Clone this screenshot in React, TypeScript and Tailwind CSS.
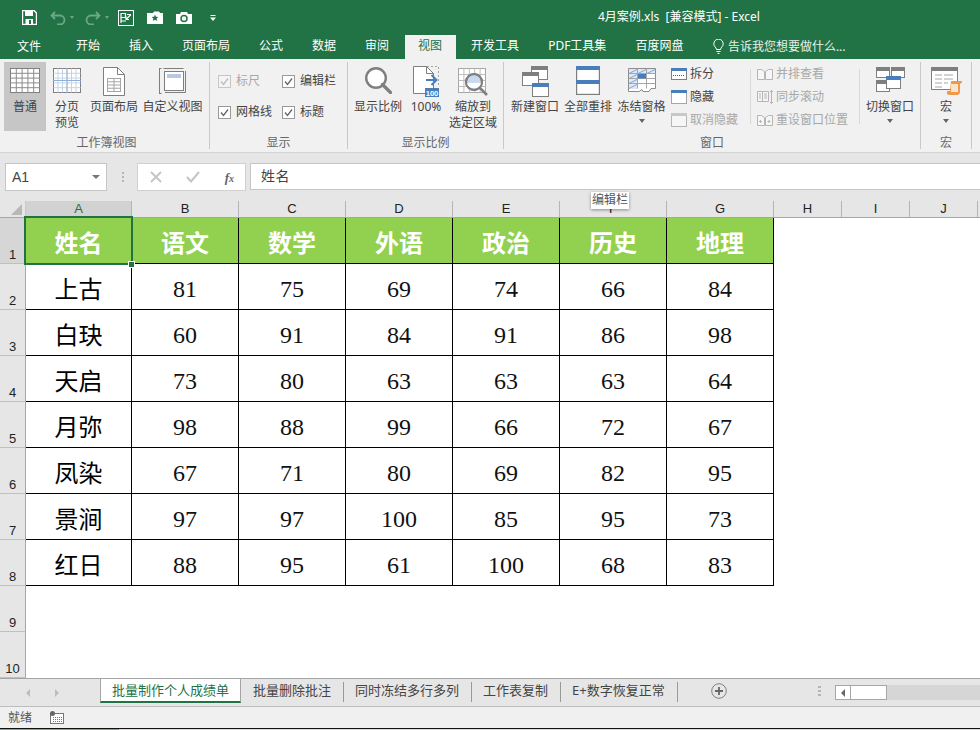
import React from "react";

const headers = ["姓名", "语文", "数学", "外语", "政治", "历史", "地理"];
const rows: (string | number)[][] = [
  ["上古", 81, 75, 69, 74, 66, 84],
  ["白玦", 60, 91, 84, 91, 86, 98],
  ["天启", 73, 80, 63, 63, 63, 64],
  ["月弥", 98, 88, 99, 66, 72, 67],
  ["凤染", 67, 71, 80, 69, 82, 95],
  ["景涧", 97, 97, 100, 85, 95, 73],
  ["红日", 88, 95, 61, 100, 68, 83],
];
const colClasses = ["w-[106px]", "w-[107px]", "w-[107px]", "w-[107px]", "w-[107px]", "w-[107px]", "w-[107px]"];
const GRAY = "#7f7f7f";
const BLUE = "#4a7ebb";

function GridLines({ x, y, w, h, cols, rows: r, stroke = "#a6a6a6" }: { x: number; y: number; w: number; h: number; cols: number; rows: number; stroke?: string }) {
  const lines = [];
  for (let i = 1; i < cols; i++) lines.push(<line key={"c" + i} x1={x + (w * i) / cols} x2={x + (w * i) / cols} y1={y} y2={y + h} stroke={stroke} />);
  for (let i = 1; i < r; i++) lines.push(<line key={"r" + i} x1={x} x2={x + w} y1={y + (h * i) / r} y2={y + (h * i) / r} stroke={stroke} />);
  return <>{lines}</>;
}

function Svg({ w, h, children }: { w: number; h: number; children: React.ReactNode }) {
  return (
    <svg width={w} height={h} viewBox={`0 0 ${w} ${h}`} className="block shrink-0">
      {children}
    </svg>
  );
}

const NormalIcon = () => (
  <Svg w={30} h={25}>
    <rect x="0.5" y="0.5" width="29" height="24" fill="#fff" stroke={GRAY} />
    <GridLines x={0.5} y={0.5} w={29} h={24} cols={5} rows={5} stroke="#8c8c8c" />
  </Svg>
);
const PageBreakIcon = () => (
  <Svg w={28} h={25}>
    <rect x="0.5" y="0.5" width="27" height="24" fill="#fff" stroke={GRAY} />
    <GridLines x={0.5} y={0.5} w={27} h={24} cols={6} rows={5} stroke="#c5d3e6" />
    <line x1="14" x2="14" y1="0" y2="25" stroke="#8fb0d8" />
    <line x1="0" x2="28" y1="12.5" y2="12.5" stroke="#8fb0d8" />
  </Svg>
);
const PageLayoutIcon = () => (
  <Svg w={22} h={29}>
    <path d="M.5.5h14l7 7v21H.5z" fill="#fff" stroke={GRAY} />
    <path d="M14.5.5v7h7" fill="none" stroke={GRAY} />
    <rect x="4.5" y="11.5" width="13" height="13" fill="none" stroke="#a6a6a6" />
    <GridLines x={4.5} y={11.5} w={13} h={13} cols={2} rows={4} />
  </Svg>
);
const CustomViewIcon = () => (
  <Svg w={28} h={28}>
    <path d="M4.500 1.500h20M26.500 4v21.500H6" fill="none" stroke={GRAY} />
    <path d="M.5 1v26M0 1.500h2.500M0 26.500h2.500" stroke={GRAY} fill="none" />
    <rect x="5.5" y="4.5" width="19" height="19" fill="#fff" stroke={GRAY} />
    <rect x="8" y="7" width="14" height="4" fill="#b6c9e4" />
  </Svg>
);
const MagnifierIcon = () => (
  <Svg w={27} h={27}>
    <circle cx="11" cy="11" r="9.800" fill="#fff" stroke={GRAY} strokeWidth="2.400" />
    <line x1="17.500" y1="17.500" x2="25.500" y2="25.500" stroke={GRAY} strokeWidth="3.200" strokeLinecap="round" />
  </Svg>
);
const Zoom100Icon = () => (
  <Svg w={26} h={31}>
    <path d="M.5.5h13l7 7v20H.5z" fill="#fff" stroke={GRAY} />
    <path d="M13.500.5v7h7" fill="none" stroke={GRAY} />
    <path d="M14 .5h11.500v20" fill="none" stroke="#a6a6a6" strokeDasharray="2 2" />
    <path d="M13 14h10M18.500 9l5 5-5 5" fill="none" stroke={BLUE} strokeWidth="2" />
    <rect x="12" y="22" width="14" height="9" fill={BLUE} />
    <text x="19" y="29.500" fontSize="7.500" fontWeight="700" fill="#fff" textAnchor="middle" fontFamily="Liberation Sans">100</text>
  </Svg>
);
const ZoomSelIcon = () => (
  <Svg w={30} h={28}>
    <rect x="0.5" y="0.5" width="27" height="24" fill="#fff" stroke="#a6a6a6" />
    <GridLines x={0.5} y={0.5} w={27} h={24} cols={5} rows={4} stroke="#bdbdbd" />
    <circle cx="16" cy="14" r="8" fill="#c9d9ee" stroke={GRAY} strokeWidth="2" />
    <path d="M9 15h14v2a8 6 0 0 1-14 0z" fill="#fff" />
    <circle cx="16" cy="14" r="8" fill="none" stroke={GRAY} strokeWidth="2" />
    <line x1="22" y1="20" x2="29" y2="27" stroke={GRAY} strokeWidth="2.600" />
  </Svg>
);
const WinBox = ({ x, y, w, h, fill = GRAY, bar = 4 }: { x: number; y: number; w: number; h: number; fill?: string; bar?: number }) => (
  <>
    <rect x={x + 0.5} y={y + 0.5} width={w - 1} height={h - 1} fill="#fff" stroke={GRAY} />
    <rect x={x} y={y} width={w} height={bar} fill={fill} />
  </>
);
const NewWindowIcon = () => (
  <Svg w={27} h={31}>
    <WinBox x={9} y={0} w={17} h={14} />
    <WinBox x={0} y={6} w={17} h={14} />
    <WinBox x={10} y={17} w={17} h={14} fill={BLUE} />
  </Svg>
);
const ArrangeIcon = () => (
  <Svg w={24} h={29}>
    <rect x="0.6" y="0.6" width="22.800" height="27.800" fill="#fff" stroke={GRAY} strokeWidth="1.200" />
    <rect x="0" y="0" width="24" height="4" fill={BLUE} />
    <rect x="0" y="14" width="24" height="4" fill={BLUE} />
  </Svg>
);
const FreezeIcon = () => (
  <Svg w={28} h={25}>
    <path d="M.5.5h27v20H23l-2 3h-6l-1-2-3 2H.5z" fill="#fff" stroke="#8c8c8c" />
    <rect x="1" y="1" width="26" height="5" fill="#dfe8f4" />
    <rect x="1" y="6" width="9" height="15" fill="#dfe8f4" />
    <GridLines x={0.5} y={0.5} w={27} h={20} cols={3} rows={4} stroke="#a6a6a6" />
    <path d="M1 5.500l8-4M10 5.500l8-4M19 5.500l8-4M1 10.500l8-4M1 15.500l8-4M1 20.500l8-4" stroke="#7ea6d6" />
    <rect x="10" y="6" width="8" height="4.500" fill={BLUE} />
  </Svg>
);
const SplitIcon = () => (
  <Svg w={16} h={12}>
    <rect x="0.5" y="0.5" width="15" height="11" fill="#fff" stroke={GRAY} />
    <rect x="0" y="0" width="16" height="3" fill={BLUE} />
    <line x1="2" x2="14" y1="7.500" y2="7.500" stroke="#555" strokeDasharray="1 1" />
  </Svg>
);
const HideIcon = () => (
  <Svg w={16} h={14}>
    <rect x="0.5" y="0.5" width="15" height="13" fill="#fff" stroke="#555" strokeDasharray="1 1" />
    <rect x="0" y="0" width="16" height="3" fill={BLUE} />
  </Svg>
);
const UnhideIcon = () => (
  <Svg w={16} h={14}>
    <rect x="0.5" y="0.5" width="15" height="13" fill="#f6f6f6" stroke="#b5b5b5" />
    <rect x="0" y="0" width="16" height="3" fill="#c8c8c8" />
  </Svg>
);
const SideBySideIcon = () => (
  <Svg w={16} h={12}>
    <path d="M.5 1.500h4l3 2v8h-7zM8.500 3.500l3-2h4v10h-7z" fill="#f6f6f6" stroke="#b5b5b5" />
  </Svg>
);
const SyncIcon = () => (
  <Svg w={16} h={14}>
    <path d="M.5 1.500h5v10h-5zM5.500 1.500h6v10h-6z" fill="#f6f6f6" stroke="#b5b5b5" />
    <path d="M2 4h2M2 6h2M2 8h2M7 4h3M7 6h3M7 8h3" stroke="#b5b5b5" />
    <path d="M14.500 0v14M13 2l1.500-1.500L16 2M13 12l1.500 1.500L16 12" fill="none" stroke="#b5b5b5" />
  </Svg>
);
const ResetIcon = () => (
  <Svg w={16} h={12}>
    <path d="M.5 1.500h4l3 2v8h-7zM8.500 3.500l3-2h4v10h-7z" fill="#f6f6f6" stroke="#b5b5b5" />
    <path d="M2 7.500h3M3.500 6v3M10.500 7.500h3M12 6v3" stroke="#b5b5b5" />
  </Svg>
);
const SwitchIcon = () => (
  <Svg w={29} h={25}>
    <WinBox x={0} y={0} w={14} h={11} />
    <WinBox x={15} y={0} w={14} h={11} />
    <WinBox x={0} y={13} w={14} h={12} />
    <rect x="10.500" y="9.500" width="14" height="12" fill="#fff" stroke={GRAY} />
    <rect x="10" y="9" width="15" height="4" fill={BLUE} />
  </Svg>
);
const MacroIcon = () => (
  <Svg w={31} h={28}>
    <rect x="0.5" y="0.5" width="26" height="22" fill="#fff" stroke={GRAY} />
    <rect x="0" y="0" width="27" height="4" fill={GRAY} />
    <path d="M4 8h7M13 8h9M4 12h7M13 12h9M4 16h7M13 16h4M4 20h7" stroke="#a6a6a6" />
    <path d="M20 14h11v1.500l-2 1.500v9l-2 2H18l-2-1v-3h3z" fill="#ed9a4c" />
    <rect x="20" y="17" width="7" height="8" fill="#fbe3c9" />
  </Svg>
);

function BigButton({ className, icon, lines, active, arrow, iconClass = "" }: { className: string; icon: React.ReactNode; lines: string[]; active?: boolean; arrow?: boolean; iconClass?: string }) {
  return (
    <div className={`h-[69px] flex flex-col items-center shrink-0 ${className} ${active ? "bg-[#c6c6c6]" : ""}`}>
      <div className={`h-[32px] flex justify-center shrink-0 overflow-visible ${iconClass}`}>{icon}</div>
      <div className="mt-[5px] text-[12px] leading-[16px] text-center text-[#444] whitespace-nowrap">
        {lines.map((l) => (
          <div key={l}>{l}</div>
        ))}
      </div>
      {arrow && <div className="mt-[4px] w-0 h-0 border-x-[3.5px] border-x-transparent border-t-[4px] border-t-[#666]" />}
    </div>
  );
}

function Group({ className, label, children }: { className: string; label: string; children: React.ReactNode }) {
  return (
    <div className={`shrink-0 h-[87px] border-r border-[#c9c9c9] flex flex-col ${className}`}>
      <div className="h-[69px] flex">{children}</div>
      <div className="h-[20px] mt-[2px] text-[12px] leading-[20px] text-center text-[#666]">{label}</div>
    </div>
  );
}

function Check({ label, disabled }: { label: string; disabled?: boolean }) {
  return (
    <div className={`flex items-center gap-[5px] text-[12px] leading-[16px] ${disabled ? "text-[#a8a8a8]" : "text-[#444]"}`}>
      <svg width="13" height="13" viewBox="0 0 13 13" className="block">
        <rect x="0.5" y="0.5" width="12" height="12" fill={disabled ? "#f4f4f4" : "#fff"} stroke={disabled ? "#c6c6c6" : "#9a9a9a"} />
        <path d="M3 6.500 5.500 9.500 10 3.500" fill="none" stroke={disabled ? "#bcbcbc" : "#666"} strokeWidth="1.300" />
      </svg>
      <span>{label}</span>
    </div>
  );
}

function SmallItem({ icon, label, disabled }: { icon: React.ReactNode; label: string; disabled?: boolean }) {
  return (
    <div className={`h-[23px] flex items-center gap-[3px] text-[12px] whitespace-nowrap ${disabled ? "text-[#a8a8a8]" : "text-[#444]"}`}>
      <div className="w-[16px] flex justify-center">{icon}</div>
      <span>{label}</span>
    </div>
  );
}

function Tab({ label, active }: { label: string; active?: boolean }) {
  return (
    <div className={`h-[24px] text-[12px] leading-[22px] whitespace-nowrap ${active ? "bg-[#f1f1f1] text-[#217346] pl-[13px] pr-[14px] ml-[1.5px] mr-[0.5px]" : "text-white px-[14.5px]"}`}>
      {label}
    </div>
  );
}

function SheetTab({ label, active }: { label: string; active?: boolean }) {
  return active ? (
    <div className="h-[25px] -mt-px mr-px px-[11px] bg-white border-x border-t border-[#a5a5a5] border-b-2 border-b-[#217346] text-[#217346] text-[13px] leading-[22px] whitespace-nowrap">
      {label}
    </div>
  ) : (
    <div className="h-[20px] my-[3px] pl-[11px] pr-[12px] border-r border-[#9a9a9a] text-[#444] text-[13px] leading-[17px] whitespace-nowrap">{label}</div>
  );
}

function Qat({ children }: { children: React.ReactNode }) {
  return <div className="w-[16px] flex justify-center items-center shrink-0">{children}</div>;
}

export default function App() {
  return (
    <div className="w-[980px] h-[730px] overflow-hidden relative bg-white font-['Noto_Sans','Noto_Sans_CJK_SC',sans-serif] select-none">
      {/* title bar */}
      <div className="h-[35px] bg-[#217346] flex items-center pl-[21px] text-white relative">
        <div className="flex items-center h-[30px]">
          <Qat>
            <svg width="15" height="15" viewBox="0 0 15 15"><path d="M.5.5h11.500l2.500 2.500v11.500H.5z" fill="none" stroke="#fff" strokeWidth="1.400" /><rect x="3" y="1" width="8" height="5" fill="#fff" /><rect x="3.500" y="9" width="7.500" height="5" fill="#fff" /><rect x="7" y="10" width="2" height="4" fill="#217346" /></svg>
          </Qat>
          <div className="w-[13px]" />
          <Qat>
            <svg width="16" height="14" viewBox="0 0 16 14"><path d="M5 1 1.500 4.500 5 8M2 4.500h8a4.500 4.500 0 0 1 0 9H7" fill="none" stroke="#6ea58a" strokeWidth="1.800" /></svg>
          </Qat>
          <div className="ml-[4px] w-0 h-0 border-x-[2.5px] border-x-transparent border-t-[3px] border-t-[#6ea58a]" />
          <div className="w-[11px]" />
          <Qat>
            <svg width="16" height="14" viewBox="0 0 16 14"><path d="M11 1l3.500 3.500L11 8M14 4.500H6a4.500 4.500 0 0 0 0 9h3" fill="none" stroke="#6ea58a" strokeWidth="1.800" /></svg>
          </Qat>
          <div className="ml-[4px] w-0 h-0 border-x-[2.5px] border-x-transparent border-t-[3px] border-t-[#6ea58a]" />
          <div className="w-[9px]" />
          <Qat>
            <svg width="16" height="16" viewBox="0 0 16 16"><rect x=".5" y=".5" width="15" height="15" fill="none" stroke="#fff" /><path d="M3 3.500h4.500v4H3zM3 3v10M9 4.500h4M13 4.500l-5 5M8 6.500v3h3M3 11h5" fill="none" stroke="#fff" strokeWidth="1.200" /></svg>
          </Qat>
          <div className="w-[13px]" />
          <Qat>
            <svg width="16" height="13" viewBox="0 0 16 13"><path d="M0 2h6l1-1.500h5l1 1.500h3v11H0z" fill="#fff" /><path d="M8 3.500l1 2.300 2.400.2-1.800 1.600.6 2.400L8 8.700 5.800 10l.6-2.400L4.600 6 7 5.800z" fill="#217346" /></svg>
          </Qat>
          <div className="w-[13px]" />
          <Qat>
            <svg width="16" height="12" viewBox="0 0 16 12"><path d="M0 2h4l1-2h6l1 2h4v10H0z" fill="#fff" /><circle cx="8" cy="6.500" r="3" fill="#fff" stroke="#217346" strokeWidth="1.500" /></svg>
          </Qat>
          <div className="w-[18px]" />
          <div className="w-[6px]">
            <svg width="6" height="6" viewBox="0 0 6 6" className="block"><path d="M.5.5h5" stroke="#fff" /><path d="M0 2.500h6L3 6z" fill="#fff" /></svg>
          </div>
        </div>
        <div className="absolute left-[598px] top-[8px] text-[12px] leading-[18px] whitespace-pre">4月案例.xls  [兼容模式] - Excel</div>
      </div>

      {/* tabs */}
      <div className="h-[24px] bg-[#217346] flex">
        <div className="w-[61.5px] h-[24px] text-[12px] leading-[24px] text-white pl-[17px]">文件</div>
        {["开始", "插入", "页面布局", "公式", "数据", "审阅"].map((t) => (
          <Tab key={t} label={t} />
        ))}
        <Tab label="视图" active />
        {["开发工具", "PDF工具集", "百度网盘"].map((t) => (
          <Tab key={t} label={t} />
        ))}
        <div className="flex items-start pt-[4px] gap-[4px] ml-[15px] text-[12px] leading-[15px] text-[#e8f0ec] whitespace-nowrap">
          <svg width="11" height="15" viewBox="0 0 11 15" className="block"><path d="M3.500 10.500C3 8 .8 7.500.8 4.800a4.700 4.700 0 0 1 9.400 0C10.200 7.500 8 8 7.500 10.500zM3.500 12.500h4M4.500 14.500h2" fill="none" stroke="#fff" /></svg>
          <span>告诉我您想要做什么...</span>
        </div>
      </div>

      {/* ribbon */}
      <div className="h-[94px] bg-[#f1f1f1] border-b border-[#d4d4d4] flex pt-[3px] pl-[4px]">
        <Group className="w-[206px]" label="工作簿视图">
          <BigButton className="w-[42px]" icon={<NormalIcon />} lines={["普通"]} active iconClass="pt-[6px]" />
          <BigButton className="w-[42px]" icon={<PageBreakIcon />} lines={["分页", "预览"]} iconClass="pt-[6px]" />
          <BigButton className="w-[52px]" icon={<PageLayoutIcon />} lines={["页面布局"]} iconClass="pt-[5px]" />
          <BigButton className="w-[65px]" icon={<CustomViewIcon />} lines={["自定义视图"]} iconClass="pt-[5px]" />
        </Group>
        <Group className="w-[138px]" label="显示">
          <div className="pl-[8px] pt-[11px] grid grid-cols-[64px_64px] grid-rows-[31px_31px] items-start">
            <Check label="标尺" disabled />
            <Check label="编辑栏" />
            <Check label="网格线" />
            <Check label="标题" />
          </div>
        </Group>
        <Group className="w-[156px]" label="显示比例">
          <div className="w-[4px]" />
          <BigButton className="w-[52px]" icon={<MagnifierIcon />} lines={["显示比例"]} iconClass="pt-[5px]" />
          <BigButton className="w-[44px]" icon={<Zoom100Icon />} lines={["100%"]} iconClass="pt-[4px]" />
          <BigButton className="w-[50px]" icon={<ZoomSelIcon />} lines={["缩放到", "选定区域"]} iconClass="pt-[6px]" />
        </Group>
        <Group className="w-[417px]" label="窗口">
          <div className="w-[4px]" />
          <BigButton className="w-[54px]" icon={<NewWindowIcon />} lines={["新建窗口"]} iconClass="pt-[4px]" />
          <BigButton className="w-[52px]" icon={<ArrangeIcon />} lines={["全部重排"]} iconClass="pt-[4px]" />
          <BigButton className="w-[55px]" icon={<FreezeIcon />} lines={["冻结窗格"]} iconClass="pt-[6px]" arrow />
          <div className="pl-[2px] w-[81px]">
            <SmallItem icon={<SplitIcon />} label="拆分" />
            <SmallItem icon={<HideIcon />} label="隐藏" />
            <SmallItem icon={<UnhideIcon />} label="取消隐藏" disabled />
          </div>
          <div className="w-[109px] h-[55px] mt-[7px] border-l border-[#d9d9d9] pl-[6px]">
            <div className="-mt-[7px]">
              <SmallItem icon={<SideBySideIcon />} label="并排查看" disabled />
              <SmallItem icon={<SyncIcon />} label="同步滚动" disabled />
              <SmallItem icon={<ResetIcon />} label="重设窗口位置" disabled />
            </div>
          </div>
          <div className="h-[55px] mt-[7px] border-l border-[#d9d9d9]" />
          <BigButton className="w-[60px]" icon={<SwitchIcon />} lines={["切换窗口"]} iconClass="pt-[5px]" arrow />
        </Group>
        <Group className="w-[51px]" label="宏">
          <BigButton className="w-[50px]" icon={<MacroIcon />} lines={["宏"]} iconClass="pt-[5px]" arrow />
        </Group>
      </div>

      {/* formula band */}
      <div className="h-[48px] bg-[#e6e6e6] pt-[10px] flex items-start">
        <div className="ml-[5px] w-[102px] h-[28px] bg-white border border-[#c6c6c6] flex items-center justify-between pl-[6px] pr-[6px] text-[14px] text-[#444] font-['Liberation_Sans',sans-serif]">
          <span>A1</span>
          <span className="w-0 h-0 border-x-[4px] border-x-transparent border-t-[4px] border-t-[#777]" />
        </div>
        <div className="w-[30px] h-[28px] flex items-center justify-center">
          <svg width="3" height="11" viewBox="0 0 3 11"><path d="M1 0h2v2H1zM1 4h2v2H1zM1 8h2v2H1z" fill="#b5b5b5" /></svg>
        </div>
        <div className="w-[109px] h-[28px] bg-white border border-[#d0d0d0] flex items-center justify-between pl-[12px] pr-[11px]">
          <svg width="12" height="12" viewBox="0 0 12 12"><path d="M1 1l10 10M11 1 1 11" stroke="#c4c4c4" strokeWidth="1.800" /></svg>
          <svg width="14" height="12" viewBox="0 0 14 12"><path d="M1 6l4 4.500L13 1" fill="none" stroke="#c4c4c4" strokeWidth="2" /></svg>
          <span className="text-[13px] italic font-bold font-['Liberation_Serif',serif] text-[#666] leading-none">f<span className="text-[10px]">x</span></span>
        </div>
        <div className="ml-[4px] flex-1 h-[27px] bg-white border-y border-l border-[#c6c6c6] pl-[10px] text-[14px] leading-[24px] tracking-[0.5px] text-[#444]">姓名</div>
      </div>

      {/* grid */}
      <div className="relative">
        <div className="flex h-[17px] bg-[#e6e6e6] border-b border-[#a6a6a6] text-[13px] leading-[16px] text-[#222] font-['Liberation_Sans',sans-serif] text-center">
          <div className="w-[26px] shrink-0 border-r border-[#c9c9c9] relative overflow-hidden">
            <div className="absolute right-[3px] bottom-[2px] w-0 h-0 border-l-[11px] border-l-transparent border-b-[11px] border-b-[#b8b8b8]" />
          </div>
          {["A", "B", "C", "D", "E", "F", "G"].map((c, i) => (
            <div key={c} className={`shrink-0 border-r border-[#b5b5b5] ${colClasses[i]} ${i === 0 ? "bg-[#d2d2d2] text-[#217346]" : ""}`}>
              {c}
            </div>
          ))}
          {["H", "I", "J"].map((c) => (
            <div key={c} className="w-[68px] shrink-0 border-r border-[#b5b5b5]">
              {c}
            </div>
          ))}
        </div>

        <div className="flex flex-col h-[460px]">
          {Array.from({ length: 10 }).map((_, r) => (
            <div key={r} className="flex h-[46px] shrink-0">
              <div className={`w-[26px] shrink-0 border-r border-b border-[#a6a6a6] border-b-[#c0c0c0] text-center text-[13px] leading-[16px] text-[#222] font-['Liberation_Sans',sans-serif] flex items-end justify-center ${r === 0 ? "bg-[#d6d6d6]" : "bg-[#e6e6e6]"}`}>
                <span>{r + 1}</span>
              </div>
              {r <= 7 &&
                colClasses.map((w, c) => {
                  const v = r === 0 ? headers[c] : rows[r - 1][c];
                  return (
                    <div
                      key={c}
                      className={`shrink-0 border-r border-b border-black flex items-center justify-center text-[24px] ${w} ${
                        r === 0
                          ? "pt-[3px] bg-[#92d050] text-white font-bold font-['Noto_Sans_CJK_SC',sans-serif]"
                          : c === 0
                          ? "pt-[3px] text-black font-['Noto_Sans_CJK_SC',sans-serif]"
                          : "pt-[5px] text-[#111] font-['Liberation_Serif',serif]"
                      }`}
                    >
                      {v}
                    </div>
                  );
                })}
            </div>
          ))}
        </div>
        {/* selection */}
        <div className="absolute left-[24px] top-[15px] w-[109px] h-[49px] border-2 border-[#217346] pointer-events-none" />
        <div className="absolute left-[128px] top-[60px] w-[7px] h-[7px] bg-[#217346] border border-white" />
      </div>

      {/* tooltip */}
      <div className="absolute left-[591px] top-[192px] w-[38px] h-[17px] bg-white shadow-[0_1px_3px_rgba(0,0,0,0.4)] text-[12px] leading-[16px] text-center text-[#555]">编辑栏</div>

      {/* sheet tabs */}
      <div className="h-[29px] bg-[#e6e6e6] border-y border-t-[#a5a5a5] border-b-[#bdbdbd] flex items-start relative">
        <div className="w-[100px] shrink-0 h-full flex items-center gap-[25px] pl-[26px]">
          <span className="w-0 h-0 border-y-[4px] border-y-transparent border-r-[4px] border-r-[#bdbdbd]" />
          <span className="w-0 h-0 border-y-[4px] border-y-transparent border-l-[4px] border-l-[#bdbdbd]" />
        </div>
        <SheetTab label="批量制作个人成绩单" active />
        <SheetTab label="批量删除批注" />
        <SheetTab label="同时冻结多行多列" />
        <SheetTab label="工作表复制" />
        <SheetTab label="E+数字恢复正常" />
        <div className="ml-[33px] mt-[4px] w-[16px] h-[16px] shrink-0">
          <svg width="16" height="16" viewBox="0 0 16 16" className="block"><circle cx="8" cy="8" r="7.300" fill="none" stroke="#808080" /><path d="M8 4v8M4 8h8" stroke="#666" strokeWidth="1.800" /></svg>
        </div>
        <div className="ml-[91px] mt-[7px] w-[3px] shrink-0">
          <svg width="3" height="11" viewBox="0 0 3 11" className="block"><path d="M0 0h3v2H0zM0 4h3v2H0zM0 8h3v2H0z" fill="#b5b5b5" /></svg>
        </div>
        <div className="ml-[14px] mt-[6px] flex-1 h-[15px] bg-[#d6d6d6] flex">
          <div className="w-[16px] h-[15px] bg-white border border-[#a6a6a6] flex items-center justify-center">
            <span className="w-0 h-0 border-y-[4px] border-y-transparent border-r-[4px] border-r-[#666]" />
          </div>
          <div className="w-[36px] h-[15px] bg-white border-y border-r border-[#a6a6a6]" />
        </div>
      </div>

      {/* status bar */}
      <div className="h-[21px] bg-[#f0f0f0] flex items-center pl-[8px] text-[12px] text-[#555]">
        <span>就绪</span>
        <svg width="14" height="13" viewBox="0 0 14 13" className="ml-[18px] block"><rect x=".5" y="2.500" width="13" height="10" fill="#fff" stroke="#777" /><rect x="0" y="0" width="5" height="5" rx="2.500" fill="#666" /><path d="M3 6.500h9M3 8.500h9M3 10.500h9" stroke="#777" strokeDasharray="1 1" /></svg>
      </div>
      <div className="h-px bg-[#111]" />
      <div className="h-px bg-[#dcdcdc] flex">
        <div className="w-[119px] bg-[#8fa097]" />
      </div>
    </div>
  );
}
